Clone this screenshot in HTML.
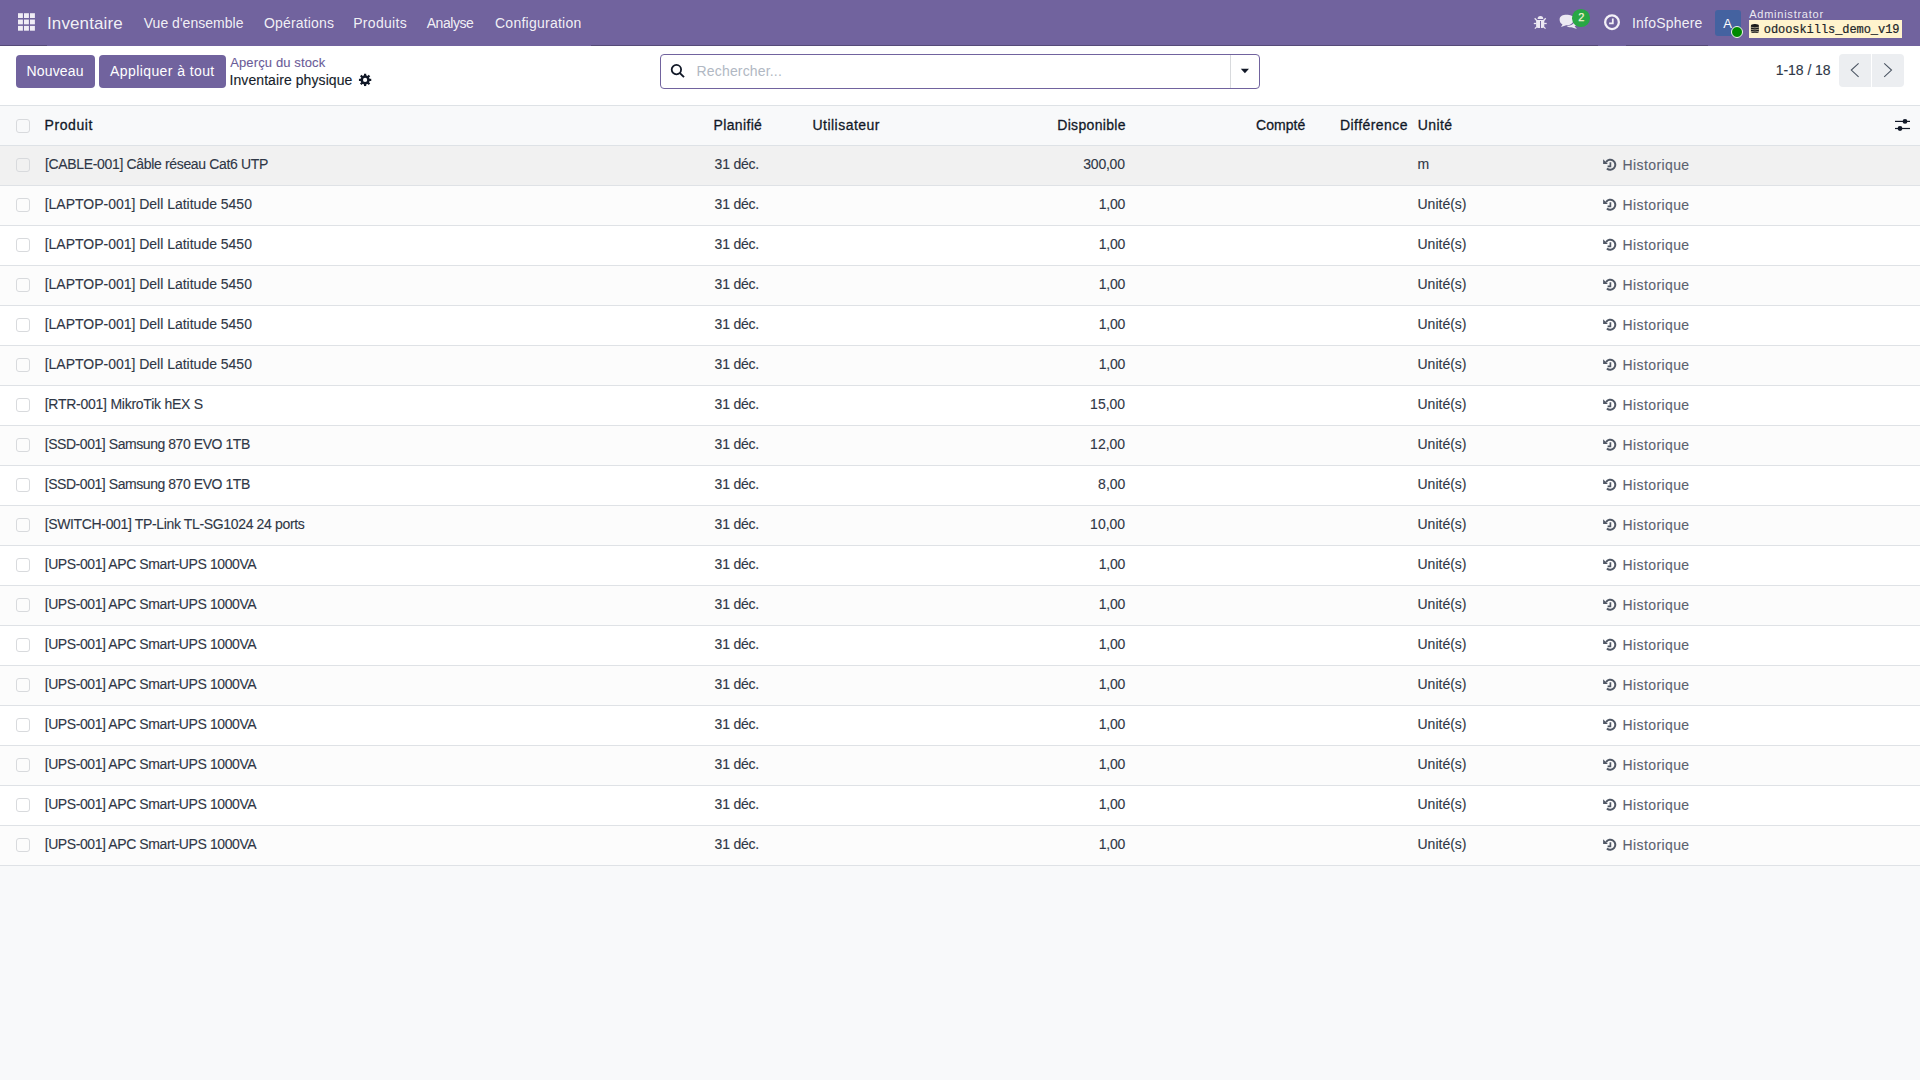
<!DOCTYPE html><html><head><meta charset="utf-8"><style>
html,body{margin:0;padding:0;}
body{width:1920px;height:1080px;overflow:hidden;background:#f8f9fa;position:relative;font-family:'Liberation Sans', sans-serif;}
.t{position:absolute;white-space:nowrap;line-height:20px;}
.abs{position:absolute;}

</style></head><body>
<div class="abs" style="left:0;top:0;width:1920px;height:46px;background:#71639e"></div>
<div class="abs" style="left:0px;top:45px;width:47px;height:1px;background:#554a78"></div>
<div class="abs" style="left:591px;top:45px;width:1007px;height:1px;background:#554a78"></div>
<div class="abs" style="left:1626px;top:45px;width:82px;height:1px;background:#554a78"></div>
<svg class="abs" style="left:0;top:0" width="40" height="40" viewBox="0 0 40 40"><rect x="18.00" y="13.20" width="4.9" height="4.8" fill="#f0edf5"/><rect x="24.00" y="13.20" width="4.9" height="4.8" fill="#f0edf5"/><rect x="30.00" y="13.20" width="4.9" height="4.8" fill="#f0edf5"/><rect x="18.00" y="19.55" width="4.9" height="4.8" fill="#f0edf5"/><rect x="24.00" y="19.55" width="4.9" height="4.8" fill="#f0edf5"/><rect x="30.00" y="19.55" width="4.9" height="4.8" fill="#f0edf5"/><rect x="18.00" y="25.90" width="4.9" height="4.8" fill="#f0edf5"/><rect x="24.00" y="25.90" width="4.9" height="4.8" fill="#f0edf5"/><rect x="30.00" y="25.90" width="4.9" height="4.8" fill="#f0edf5"/></svg>
<div class="t" style="left:47.00px;top:14px;font-size:17px;font-weight:400;color:rgba(255,255,255,0.92);letter-spacing:0.11px;">Inventaire</div>
<div class="t" style="left:143.75px;top:13px;font-size:14px;font-weight:400;color:rgba(255,255,255,0.92);letter-spacing:0.02px;">Vue d'ensemble</div>
<div class="t" style="left:264.00px;top:13px;font-size:14px;font-weight:400;color:rgba(255,255,255,0.92);letter-spacing:0.17px;">Opérations</div>
<div class="t" style="left:353.20px;top:13px;font-size:14px;font-weight:400;color:rgba(255,255,255,0.92);letter-spacing:0.31px;">Produits</div>
<div class="t" style="left:426.70px;top:13px;font-size:14px;font-weight:400;color:rgba(255,255,255,0.92);letter-spacing:-0.45px;">Analyse</div>
<div class="t" style="left:495.00px;top:13px;font-size:14px;font-weight:400;color:rgba(255,255,255,0.92);letter-spacing:0.25px;">Configuration</div>
<svg class="abs" style="left:1530px;top:10px" width="22" height="22" viewBox="0 0 22 22"><g fill="#ece9f3"><path d="M7.6 9 A2.85 3.1 0 0 1 13.3 9 Z"/><path d="M6.1 10 H14.3 V16 Q14.3 18 12.3 18 H8.1 Q6.1 18 6.1 16Z"/></g><rect x="10.05" y="11" width="0.95" height="7.2" fill="#71639e"/><g stroke="#ece9f3" stroke-width="1.3"><line x1="4.7" y1="8.3" x2="6.8" y2="10.5"/><line x1="15.7" y1="8.3" x2="13.6" y2="10.5"/><line x1="3.8" y1="13.5" x2="6.3" y2="13.5"/><line x1="14.1" y1="13.5" x2="16.7" y2="13.5"/><line x1="4.9" y1="18.6" x2="7" y2="16.6"/><line x1="15.5" y1="18.6" x2="13.4" y2="16.6"/></g></svg>
<svg class="abs" style="left:1555px;top:6px" width="40" height="28" viewBox="0 0 40 28"><g fill="#ece9f3"><path d="M19 12.5 C19 18 14 19.5 11.2 19.2 L6 21 L7.5 18.5 C5.5 17.5 4.6 15.5 4.6 13.5 C4.6 10 8 8.7 11.5 8.7 C15 8.7 19 9.8 19 12.5Z"/><path d="M19.8 14 C21.5 15 22 16.5 21.6 18 C21.2 19.3 20.2 20 19.6 20.3 L21.9 23 L16.5 21.3 C14.3 21.4 12.4 20.8 11.6 19.9 C16.5 19.6 19.8 17.8 19.8 14Z"/></g></svg>
<div class="abs" style="left:1572px;top:9px;width:18px;height:17.5px;border-radius:50%;background:#28a745"></div>
<div class="t" style="left:1578.20px;top:7px;font-size:11px;font-weight:400;color:#f6f3d0;-webkit-text-stroke:0.25px #f6f3d0;">2</div>
<svg class="abs" style="left:1603px;top:14px" width="18" height="18" viewBox="0 0 18 18"><circle cx="9" cy="8.2" r="6.85" fill="none" stroke="#f3f0f7" stroke-width="2.3"/><path d="M9.8 4.4 V9.3 H6.1" fill="none" stroke="#f3f0f7" stroke-width="1.8"/></svg>
<div class="t" style="left:1632.00px;top:13px;font-size:14px;font-weight:400;color:rgba(255,255,255,0.92);letter-spacing:0.2px;">InfoSphere</div>
<div class="abs" style="left:1715px;top:10px;width:26px;height:26px;border-radius:3px;background:#4462a0"></div>
<div class="t" style="left:1723.20px;top:14px;font-size:13px;font-weight:400;color:#ffffff;">A</div>
<div class="abs" style="left:1730.5px;top:25.5px;width:10px;height:10px;border-radius:50%;background:#008a00;border:1.3px solid #f3f3f3"></div>
<div class="t" style="left:1749.20px;top:4px;font-size:11px;font-weight:400;color:rgba(255,255,255,0.88);letter-spacing:0.76px;">Administrator</div>
<div class="abs" style="left:1749px;top:20px;width:153px;height:18px;background:#fff3cd"></div>
<svg class="abs" style="left:1750px;top:23px" width="10" height="12" viewBox="0 0 10 12"><rect x="0.9" y="1.1" width="8" height="9" rx="3.6" ry="1.6" fill="#1b1b1b"/><path d="M0.9 4.2 Q4.9 5.4 8.9 4.2 M0.9 6.3 Q4.9 7.5 8.9 6.3 M0.9 8.4 Q4.9 9.6 8.9 8.4" fill="none" stroke="#e9dfc0" stroke-width="0.6"/></svg>
<div class="t" style="left:1763.75px;top:20px;font-size:12px;font-weight:400;color:#212529;font-family:'Liberation Mono',monospace;letter-spacing:-0.06px;-webkit-text-stroke:0.2px #212529;">odooskills_demo_v19</div>
<div class="abs" style="left:0;top:46px;width:1920px;height:59px;background:#ffffff;border-bottom:1px solid #dee2e6"></div>
<div class="abs" style="left:16px;top:55px;width:79px;height:33px;border-radius:4px;background:#71639e"></div>
<div class="t" style="left:26.40px;top:61px;font-size:14px;font-weight:400;color:#ffffff;letter-spacing:0.2px;">Nouveau</div>
<div class="abs" style="left:99px;top:55px;width:127px;height:33px;border-radius:4px;background:#71639e"></div>
<div class="t" style="left:110.00px;top:61px;font-size:14px;font-weight:400;color:#ffffff;letter-spacing:0.41px;">Appliquer à tout</div>
<div class="t" style="left:230.20px;top:53px;font-size:13px;font-weight:400;color:#6a5b98;letter-spacing:0.13px;-webkit-text-stroke:0.1px #6a5b98;">Aperçu du stock</div>
<div class="t" style="left:229.50px;top:70px;font-size:14px;font-weight:400;color:#161c2a;letter-spacing:0.08px;-webkit-text-stroke:0.12px #161c2a;">Inventaire physique</div>
<svg class="abs" style="left:358px;top:73px" width="14" height="14" viewBox="0 0 14 14"><g fill="#111827"><circle cx="7.1" cy="6.9" r="4.6"/><rect x="6" y="0.75" width="2.2" height="3.5" transform="rotate(0 7.1 6.9)"/><rect x="6" y="0.75" width="2.2" height="3.5" transform="rotate(45 7.1 6.9)"/><rect x="6" y="0.75" width="2.2" height="3.5" transform="rotate(90 7.1 6.9)"/><rect x="6" y="0.75" width="2.2" height="3.5" transform="rotate(135 7.1 6.9)"/><rect x="6" y="0.75" width="2.2" height="3.5" transform="rotate(180 7.1 6.9)"/><rect x="6" y="0.75" width="2.2" height="3.5" transform="rotate(225 7.1 6.9)"/><rect x="6" y="0.75" width="2.2" height="3.5" transform="rotate(270 7.1 6.9)"/><rect x="6" y="0.75" width="2.2" height="3.5" transform="rotate(315 7.1 6.9)"/></g><circle cx="7.1" cy="6.9" r="2.1" fill="#fff"/></svg>
<div class="abs" style="left:660px;top:54px;width:598px;height:33px;border:1px solid #71639e;border-radius:4px;background:#fff"></div>
<div class="abs" style="left:1230px;top:55px;width:1px;height:33px;background:#d8dadd"></div>
<svg class="abs" style="left:670px;top:63px" width="16" height="16" viewBox="0 0 16 16"><circle cx="6.4" cy="6.6" r="4.7" fill="none" stroke="#111827" stroke-width="1.8"/><line x1="9.9" y1="10.1" x2="14" y2="14.2" stroke="#111827" stroke-width="1.9"/></svg>
<div class="t" style="left:696.60px;top:61px;font-size:14px;font-weight:400;color:#b1b8c3;letter-spacing:0.16px;">Rechercher...</div>
<svg class="abs" style="left:1240px;top:68px" width="10" height="6" viewBox="0 0 10 6"><path d="M0.8 0.8 H9 L4.9 5.2Z" fill="#111827"/></svg>
<div class="t" style="left:1775.70px;top:60px;font-size:14px;font-weight:400;color:#2f3746;letter-spacing:-0.04px;-webkit-text-stroke:0.12px #2f3746;">1-18 / 18</div>
<div class="abs" style="left:1839px;top:54px;width:32px;height:33px;border-radius:4px 0 0 4px;background:#eceef1"></div>
<div class="abs" style="left:1872px;top:54px;width:32px;height:33px;border-radius:0 4px 4px 0;background:#eceef1"></div>
<svg class="abs" style="left:1849px;top:62px" width="12" height="17" viewBox="0 0 12 17"><path d="M9.6 1.3 L2.3 8.1 L9.6 14.9" fill="none" stroke="#4b5563" stroke-width="1.1"/></svg>
<svg class="abs" style="left:1882px;top:62px" width="12" height="17" viewBox="0 0 12 17"><path d="M2.2 1.3 L9.5 8.1 L2.2 14.9" fill="none" stroke="#4b5563" stroke-width="1.1"/></svg>
<div class="abs" style="left:0;top:106px;width:1920px;height:39px;background:#f8f9fa;border-bottom:1px solid #dee2e6"></div>
<div class="abs" style="left:16px;top:119px;width:12px;height:12px;border:1px solid #d8dadd;border-radius:3px"></div>
<div class="t" style="left:44.60px;top:115px;font-size:14px;font-weight:400;color:#111827;letter-spacing:0.57px;-webkit-text-stroke:0.28px #111827;">Produit</div>
<div class="t" style="left:713.60px;top:115px;font-size:14px;font-weight:400;color:#111827;letter-spacing:0.34px;-webkit-text-stroke:0.28px #111827;">Planifié</div>
<div class="t" style="left:812.50px;top:115px;font-size:14px;font-weight:400;color:#111827;letter-spacing:0.47px;-webkit-text-stroke:0.28px #111827;">Utilisateur</div>
<div class="t" style="left:1057.20px;top:115px;font-size:14px;font-weight:400;color:#111827;letter-spacing:0.33px;-webkit-text-stroke:0.28px #111827;">Disponible</div>
<div class="t" style="left:1256.00px;top:115px;font-size:14px;font-weight:400;color:#111827;letter-spacing:0.05px;-webkit-text-stroke:0.28px #111827;">Compté</div>
<div class="t" style="left:1340.00px;top:115px;font-size:14px;font-weight:400;color:#111827;letter-spacing:0.44px;-webkit-text-stroke:0.28px #111827;">Différence</div>
<div class="t" style="left:1417.75px;top:115px;font-size:14px;font-weight:400;color:#111827;letter-spacing:0.38px;-webkit-text-stroke:0.28px #111827;">Unité</div>
<svg class="abs" style="left:1894px;top:117px" width="17" height="16" viewBox="0 0 17 16"><line x1="1" y1="4.4" x2="16" y2="4.4" stroke="#111827" stroke-width="1.2"/><circle cx="11" cy="4.4" r="2.4" fill="#111827"/><line x1="1" y1="11.5" x2="16" y2="11.5" stroke="#111827" stroke-width="1.2"/><circle cx="6" cy="11.5" r="2.4" fill="#111827"/></svg>
<div class="abs" style="left:0;top:146px;width:1920px;height:39px;background:#f1f1f1;border-bottom:1px solid #dfe2e6"></div>
<div class="abs" style="left:16px;top:158px;width:12px;height:12px;border:1px solid #d8dadd;border-radius:3px"></div>
<div class="t" style="left:45.00px;top:154px;font-size:14px;font-weight:400;color:#2f3746;letter-spacing:-0.34px;-webkit-text-stroke:0.12px #2f3746;">[CABLE-001] Câble réseau Cat6 UTP</div>
<div class="t" style="left:714.60px;top:154px;font-size:14px;font-weight:400;color:#2f3746;letter-spacing:-0.22px;-webkit-text-stroke:0.12px #2f3746;">31 déc.</div>
<div class="t" style="left:1083.30px;top:154px;font-size:14px;font-weight:400;color:#2f3746;letter-spacing:-0.24px;-webkit-text-stroke:0.12px #2f3746;">300,00</div>
<div class="t" style="left:1417.50px;top:154px;font-size:14px;font-weight:400;color:#2f3746;-webkit-text-stroke:0.12px #2f3746;">m</div>
<svg class="abs" style="left:1598px;top:154px" width="24" height="22" viewBox="0 0 24 22"><path d="M5.1 5.3 V10 H9.9Z" fill="#505866"/><path d="M8.1 8.1 A5 5 0 1 1 8.9 14.4" fill="none" stroke="#505866" stroke-width="2"/><path d="M12.4 8.2 V12.3 H9.6" fill="none" stroke="#505866" stroke-width="1.7"/></svg>
<div class="t" style="left:1622.50px;top:155px;font-size:14px;font-weight:400;color:#5b6270;letter-spacing:0.4px;-webkit-text-stroke:0.12px #5b6270;">Historique</div>
<div class="abs" style="left:0;top:186px;width:1920px;height:39px;background:#fcfcfc;border-bottom:1px solid #dfe2e6"></div>
<div class="abs" style="left:16px;top:198px;width:12px;height:12px;border:1px solid #d8dadd;border-radius:3px"></div>
<div class="t" style="left:44.70px;top:194px;font-size:14px;font-weight:400;color:#2f3746;letter-spacing:-0.01px;-webkit-text-stroke:0.12px #2f3746;">[LAPTOP-001] Dell Latitude 5450</div>
<div class="t" style="left:714.60px;top:194px;font-size:14px;font-weight:400;color:#2f3746;letter-spacing:-0.22px;-webkit-text-stroke:0.12px #2f3746;">31 déc.</div>
<div class="t" style="left:1098.80px;top:194px;font-size:14px;font-weight:400;color:#2f3746;letter-spacing:-0.23px;-webkit-text-stroke:0.12px #2f3746;">1,00</div>
<div class="t" style="left:1417.50px;top:194px;font-size:14px;font-weight:400;color:#2f3746;-webkit-text-stroke:0.12px #2f3746;">Unité(s)</div>
<svg class="abs" style="left:1598px;top:194px" width="24" height="22" viewBox="0 0 24 22"><path d="M5.1 5.3 V10 H9.9Z" fill="#505866"/><path d="M8.1 8.1 A5 5 0 1 1 8.9 14.4" fill="none" stroke="#505866" stroke-width="2"/><path d="M12.4 8.2 V12.3 H9.6" fill="none" stroke="#505866" stroke-width="1.7"/></svg>
<div class="t" style="left:1622.50px;top:195px;font-size:14px;font-weight:400;color:#5b6270;letter-spacing:0.4px;-webkit-text-stroke:0.12px #5b6270;">Historique</div>
<div class="abs" style="left:0;top:226px;width:1920px;height:39px;background:#ffffff;border-bottom:1px solid #dfe2e6"></div>
<div class="abs" style="left:16px;top:238px;width:12px;height:12px;border:1px solid #d8dadd;border-radius:3px"></div>
<div class="t" style="left:44.70px;top:234px;font-size:14px;font-weight:400;color:#2f3746;letter-spacing:-0.01px;-webkit-text-stroke:0.12px #2f3746;">[LAPTOP-001] Dell Latitude 5450</div>
<div class="t" style="left:714.60px;top:234px;font-size:14px;font-weight:400;color:#2f3746;letter-spacing:-0.22px;-webkit-text-stroke:0.12px #2f3746;">31 déc.</div>
<div class="t" style="left:1098.80px;top:234px;font-size:14px;font-weight:400;color:#2f3746;letter-spacing:-0.23px;-webkit-text-stroke:0.12px #2f3746;">1,00</div>
<div class="t" style="left:1417.50px;top:234px;font-size:14px;font-weight:400;color:#2f3746;-webkit-text-stroke:0.12px #2f3746;">Unité(s)</div>
<svg class="abs" style="left:1598px;top:234px" width="24" height="22" viewBox="0 0 24 22"><path d="M5.1 5.3 V10 H9.9Z" fill="#505866"/><path d="M8.1 8.1 A5 5 0 1 1 8.9 14.4" fill="none" stroke="#505866" stroke-width="2"/><path d="M12.4 8.2 V12.3 H9.6" fill="none" stroke="#505866" stroke-width="1.7"/></svg>
<div class="t" style="left:1622.50px;top:235px;font-size:14px;font-weight:400;color:#5b6270;letter-spacing:0.4px;-webkit-text-stroke:0.12px #5b6270;">Historique</div>
<div class="abs" style="left:0;top:266px;width:1920px;height:39px;background:#fcfcfc;border-bottom:1px solid #dfe2e6"></div>
<div class="abs" style="left:16px;top:278px;width:12px;height:12px;border:1px solid #d8dadd;border-radius:3px"></div>
<div class="t" style="left:44.70px;top:274px;font-size:14px;font-weight:400;color:#2f3746;letter-spacing:-0.01px;-webkit-text-stroke:0.12px #2f3746;">[LAPTOP-001] Dell Latitude 5450</div>
<div class="t" style="left:714.60px;top:274px;font-size:14px;font-weight:400;color:#2f3746;letter-spacing:-0.22px;-webkit-text-stroke:0.12px #2f3746;">31 déc.</div>
<div class="t" style="left:1098.80px;top:274px;font-size:14px;font-weight:400;color:#2f3746;letter-spacing:-0.23px;-webkit-text-stroke:0.12px #2f3746;">1,00</div>
<div class="t" style="left:1417.50px;top:274px;font-size:14px;font-weight:400;color:#2f3746;-webkit-text-stroke:0.12px #2f3746;">Unité(s)</div>
<svg class="abs" style="left:1598px;top:274px" width="24" height="22" viewBox="0 0 24 22"><path d="M5.1 5.3 V10 H9.9Z" fill="#505866"/><path d="M8.1 8.1 A5 5 0 1 1 8.9 14.4" fill="none" stroke="#505866" stroke-width="2"/><path d="M12.4 8.2 V12.3 H9.6" fill="none" stroke="#505866" stroke-width="1.7"/></svg>
<div class="t" style="left:1622.50px;top:275px;font-size:14px;font-weight:400;color:#5b6270;letter-spacing:0.4px;-webkit-text-stroke:0.12px #5b6270;">Historique</div>
<div class="abs" style="left:0;top:306px;width:1920px;height:39px;background:#ffffff;border-bottom:1px solid #dfe2e6"></div>
<div class="abs" style="left:16px;top:318px;width:12px;height:12px;border:1px solid #d8dadd;border-radius:3px"></div>
<div class="t" style="left:44.70px;top:314px;font-size:14px;font-weight:400;color:#2f3746;letter-spacing:-0.01px;-webkit-text-stroke:0.12px #2f3746;">[LAPTOP-001] Dell Latitude 5450</div>
<div class="t" style="left:714.60px;top:314px;font-size:14px;font-weight:400;color:#2f3746;letter-spacing:-0.22px;-webkit-text-stroke:0.12px #2f3746;">31 déc.</div>
<div class="t" style="left:1098.80px;top:314px;font-size:14px;font-weight:400;color:#2f3746;letter-spacing:-0.23px;-webkit-text-stroke:0.12px #2f3746;">1,00</div>
<div class="t" style="left:1417.50px;top:314px;font-size:14px;font-weight:400;color:#2f3746;-webkit-text-stroke:0.12px #2f3746;">Unité(s)</div>
<svg class="abs" style="left:1598px;top:314px" width="24" height="22" viewBox="0 0 24 22"><path d="M5.1 5.3 V10 H9.9Z" fill="#505866"/><path d="M8.1 8.1 A5 5 0 1 1 8.9 14.4" fill="none" stroke="#505866" stroke-width="2"/><path d="M12.4 8.2 V12.3 H9.6" fill="none" stroke="#505866" stroke-width="1.7"/></svg>
<div class="t" style="left:1622.50px;top:315px;font-size:14px;font-weight:400;color:#5b6270;letter-spacing:0.4px;-webkit-text-stroke:0.12px #5b6270;">Historique</div>
<div class="abs" style="left:0;top:346px;width:1920px;height:39px;background:#fcfcfc;border-bottom:1px solid #dfe2e6"></div>
<div class="abs" style="left:16px;top:358px;width:12px;height:12px;border:1px solid #d8dadd;border-radius:3px"></div>
<div class="t" style="left:44.70px;top:354px;font-size:14px;font-weight:400;color:#2f3746;letter-spacing:-0.01px;-webkit-text-stroke:0.12px #2f3746;">[LAPTOP-001] Dell Latitude 5450</div>
<div class="t" style="left:714.60px;top:354px;font-size:14px;font-weight:400;color:#2f3746;letter-spacing:-0.22px;-webkit-text-stroke:0.12px #2f3746;">31 déc.</div>
<div class="t" style="left:1098.80px;top:354px;font-size:14px;font-weight:400;color:#2f3746;letter-spacing:-0.23px;-webkit-text-stroke:0.12px #2f3746;">1,00</div>
<div class="t" style="left:1417.50px;top:354px;font-size:14px;font-weight:400;color:#2f3746;-webkit-text-stroke:0.12px #2f3746;">Unité(s)</div>
<svg class="abs" style="left:1598px;top:354px" width="24" height="22" viewBox="0 0 24 22"><path d="M5.1 5.3 V10 H9.9Z" fill="#505866"/><path d="M8.1 8.1 A5 5 0 1 1 8.9 14.4" fill="none" stroke="#505866" stroke-width="2"/><path d="M12.4 8.2 V12.3 H9.6" fill="none" stroke="#505866" stroke-width="1.7"/></svg>
<div class="t" style="left:1622.50px;top:355px;font-size:14px;font-weight:400;color:#5b6270;letter-spacing:0.4px;-webkit-text-stroke:0.12px #5b6270;">Historique</div>
<div class="abs" style="left:0;top:386px;width:1920px;height:39px;background:#ffffff;border-bottom:1px solid #dfe2e6"></div>
<div class="abs" style="left:16px;top:398px;width:12px;height:12px;border:1px solid #d8dadd;border-radius:3px"></div>
<div class="t" style="left:44.70px;top:394px;font-size:14px;font-weight:400;color:#2f3746;letter-spacing:-0.25px;-webkit-text-stroke:0.12px #2f3746;">[RTR-001] MikroTik hEX S</div>
<div class="t" style="left:714.60px;top:394px;font-size:14px;font-weight:400;color:#2f3746;letter-spacing:-0.22px;-webkit-text-stroke:0.12px #2f3746;">31 déc.</div>
<div class="t" style="left:1090.10px;top:394px;font-size:14px;font-weight:400;color:#2f3746;-webkit-text-stroke:0.12px #2f3746;">15,00</div>
<div class="t" style="left:1417.50px;top:394px;font-size:14px;font-weight:400;color:#2f3746;-webkit-text-stroke:0.12px #2f3746;">Unité(s)</div>
<svg class="abs" style="left:1598px;top:394px" width="24" height="22" viewBox="0 0 24 22"><path d="M5.1 5.3 V10 H9.9Z" fill="#505866"/><path d="M8.1 8.1 A5 5 0 1 1 8.9 14.4" fill="none" stroke="#505866" stroke-width="2"/><path d="M12.4 8.2 V12.3 H9.6" fill="none" stroke="#505866" stroke-width="1.7"/></svg>
<div class="t" style="left:1622.50px;top:395px;font-size:14px;font-weight:400;color:#5b6270;letter-spacing:0.4px;-webkit-text-stroke:0.12px #5b6270;">Historique</div>
<div class="abs" style="left:0;top:426px;width:1920px;height:39px;background:#fcfcfc;border-bottom:1px solid #dfe2e6"></div>
<div class="abs" style="left:16px;top:438px;width:12px;height:12px;border:1px solid #d8dadd;border-radius:3px"></div>
<div class="t" style="left:44.70px;top:434px;font-size:14px;font-weight:400;color:#2f3746;letter-spacing:-0.44px;-webkit-text-stroke:0.12px #2f3746;">[SSD-001] Samsung 870 EVO 1TB</div>
<div class="t" style="left:714.60px;top:434px;font-size:14px;font-weight:400;color:#2f3746;letter-spacing:-0.22px;-webkit-text-stroke:0.12px #2f3746;">31 déc.</div>
<div class="t" style="left:1090.10px;top:434px;font-size:14px;font-weight:400;color:#2f3746;-webkit-text-stroke:0.12px #2f3746;">12,00</div>
<div class="t" style="left:1417.50px;top:434px;font-size:14px;font-weight:400;color:#2f3746;-webkit-text-stroke:0.12px #2f3746;">Unité(s)</div>
<svg class="abs" style="left:1598px;top:434px" width="24" height="22" viewBox="0 0 24 22"><path d="M5.1 5.3 V10 H9.9Z" fill="#505866"/><path d="M8.1 8.1 A5 5 0 1 1 8.9 14.4" fill="none" stroke="#505866" stroke-width="2"/><path d="M12.4 8.2 V12.3 H9.6" fill="none" stroke="#505866" stroke-width="1.7"/></svg>
<div class="t" style="left:1622.50px;top:435px;font-size:14px;font-weight:400;color:#5b6270;letter-spacing:0.4px;-webkit-text-stroke:0.12px #5b6270;">Historique</div>
<div class="abs" style="left:0;top:466px;width:1920px;height:39px;background:#ffffff;border-bottom:1px solid #dfe2e6"></div>
<div class="abs" style="left:16px;top:478px;width:12px;height:12px;border:1px solid #d8dadd;border-radius:3px"></div>
<div class="t" style="left:44.70px;top:474px;font-size:14px;font-weight:400;color:#2f3746;letter-spacing:-0.44px;-webkit-text-stroke:0.12px #2f3746;">[SSD-001] Samsung 870 EVO 1TB</div>
<div class="t" style="left:714.60px;top:474px;font-size:14px;font-weight:400;color:#2f3746;letter-spacing:-0.22px;-webkit-text-stroke:0.12px #2f3746;">31 déc.</div>
<div class="t" style="left:1098.10px;top:474px;font-size:14px;font-weight:400;color:#2f3746;-webkit-text-stroke:0.12px #2f3746;">8,00</div>
<div class="t" style="left:1417.50px;top:474px;font-size:14px;font-weight:400;color:#2f3746;-webkit-text-stroke:0.12px #2f3746;">Unité(s)</div>
<svg class="abs" style="left:1598px;top:474px" width="24" height="22" viewBox="0 0 24 22"><path d="M5.1 5.3 V10 H9.9Z" fill="#505866"/><path d="M8.1 8.1 A5 5 0 1 1 8.9 14.4" fill="none" stroke="#505866" stroke-width="2"/><path d="M12.4 8.2 V12.3 H9.6" fill="none" stroke="#505866" stroke-width="1.7"/></svg>
<div class="t" style="left:1622.50px;top:475px;font-size:14px;font-weight:400;color:#5b6270;letter-spacing:0.4px;-webkit-text-stroke:0.12px #5b6270;">Historique</div>
<div class="abs" style="left:0;top:506px;width:1920px;height:39px;background:#fcfcfc;border-bottom:1px solid #dfe2e6"></div>
<div class="abs" style="left:16px;top:518px;width:12px;height:12px;border:1px solid #d8dadd;border-radius:3px"></div>
<div class="t" style="left:44.70px;top:514px;font-size:14px;font-weight:400;color:#2f3746;letter-spacing:-0.35px;-webkit-text-stroke:0.12px #2f3746;">[SWITCH-001] TP-Link TL-SG1024 24 ports</div>
<div class="t" style="left:714.60px;top:514px;font-size:14px;font-weight:400;color:#2f3746;letter-spacing:-0.22px;-webkit-text-stroke:0.12px #2f3746;">31 déc.</div>
<div class="t" style="left:1090.10px;top:514px;font-size:14px;font-weight:400;color:#2f3746;-webkit-text-stroke:0.12px #2f3746;">10,00</div>
<div class="t" style="left:1417.50px;top:514px;font-size:14px;font-weight:400;color:#2f3746;-webkit-text-stroke:0.12px #2f3746;">Unité(s)</div>
<svg class="abs" style="left:1598px;top:514px" width="24" height="22" viewBox="0 0 24 22"><path d="M5.1 5.3 V10 H9.9Z" fill="#505866"/><path d="M8.1 8.1 A5 5 0 1 1 8.9 14.4" fill="none" stroke="#505866" stroke-width="2"/><path d="M12.4 8.2 V12.3 H9.6" fill="none" stroke="#505866" stroke-width="1.7"/></svg>
<div class="t" style="left:1622.50px;top:515px;font-size:14px;font-weight:400;color:#5b6270;letter-spacing:0.4px;-webkit-text-stroke:0.12px #5b6270;">Historique</div>
<div class="abs" style="left:0;top:546px;width:1920px;height:39px;background:#ffffff;border-bottom:1px solid #dfe2e6"></div>
<div class="abs" style="left:16px;top:558px;width:12px;height:12px;border:1px solid #d8dadd;border-radius:3px"></div>
<div class="t" style="left:44.70px;top:554px;font-size:14px;font-weight:400;color:#2f3746;letter-spacing:-0.41px;-webkit-text-stroke:0.12px #2f3746;">[UPS-001] APC Smart-UPS 1000VA</div>
<div class="t" style="left:714.60px;top:554px;font-size:14px;font-weight:400;color:#2f3746;letter-spacing:-0.22px;-webkit-text-stroke:0.12px #2f3746;">31 déc.</div>
<div class="t" style="left:1098.80px;top:554px;font-size:14px;font-weight:400;color:#2f3746;letter-spacing:-0.23px;-webkit-text-stroke:0.12px #2f3746;">1,00</div>
<div class="t" style="left:1417.50px;top:554px;font-size:14px;font-weight:400;color:#2f3746;-webkit-text-stroke:0.12px #2f3746;">Unité(s)</div>
<svg class="abs" style="left:1598px;top:554px" width="24" height="22" viewBox="0 0 24 22"><path d="M5.1 5.3 V10 H9.9Z" fill="#505866"/><path d="M8.1 8.1 A5 5 0 1 1 8.9 14.4" fill="none" stroke="#505866" stroke-width="2"/><path d="M12.4 8.2 V12.3 H9.6" fill="none" stroke="#505866" stroke-width="1.7"/></svg>
<div class="t" style="left:1622.50px;top:555px;font-size:14px;font-weight:400;color:#5b6270;letter-spacing:0.4px;-webkit-text-stroke:0.12px #5b6270;">Historique</div>
<div class="abs" style="left:0;top:586px;width:1920px;height:39px;background:#fcfcfc;border-bottom:1px solid #dfe2e6"></div>
<div class="abs" style="left:16px;top:598px;width:12px;height:12px;border:1px solid #d8dadd;border-radius:3px"></div>
<div class="t" style="left:44.70px;top:594px;font-size:14px;font-weight:400;color:#2f3746;letter-spacing:-0.41px;-webkit-text-stroke:0.12px #2f3746;">[UPS-001] APC Smart-UPS 1000VA</div>
<div class="t" style="left:714.60px;top:594px;font-size:14px;font-weight:400;color:#2f3746;letter-spacing:-0.22px;-webkit-text-stroke:0.12px #2f3746;">31 déc.</div>
<div class="t" style="left:1098.80px;top:594px;font-size:14px;font-weight:400;color:#2f3746;letter-spacing:-0.23px;-webkit-text-stroke:0.12px #2f3746;">1,00</div>
<div class="t" style="left:1417.50px;top:594px;font-size:14px;font-weight:400;color:#2f3746;-webkit-text-stroke:0.12px #2f3746;">Unité(s)</div>
<svg class="abs" style="left:1598px;top:594px" width="24" height="22" viewBox="0 0 24 22"><path d="M5.1 5.3 V10 H9.9Z" fill="#505866"/><path d="M8.1 8.1 A5 5 0 1 1 8.9 14.4" fill="none" stroke="#505866" stroke-width="2"/><path d="M12.4 8.2 V12.3 H9.6" fill="none" stroke="#505866" stroke-width="1.7"/></svg>
<div class="t" style="left:1622.50px;top:595px;font-size:14px;font-weight:400;color:#5b6270;letter-spacing:0.4px;-webkit-text-stroke:0.12px #5b6270;">Historique</div>
<div class="abs" style="left:0;top:626px;width:1920px;height:39px;background:#ffffff;border-bottom:1px solid #dfe2e6"></div>
<div class="abs" style="left:16px;top:638px;width:12px;height:12px;border:1px solid #d8dadd;border-radius:3px"></div>
<div class="t" style="left:44.70px;top:634px;font-size:14px;font-weight:400;color:#2f3746;letter-spacing:-0.41px;-webkit-text-stroke:0.12px #2f3746;">[UPS-001] APC Smart-UPS 1000VA</div>
<div class="t" style="left:714.60px;top:634px;font-size:14px;font-weight:400;color:#2f3746;letter-spacing:-0.22px;-webkit-text-stroke:0.12px #2f3746;">31 déc.</div>
<div class="t" style="left:1098.80px;top:634px;font-size:14px;font-weight:400;color:#2f3746;letter-spacing:-0.23px;-webkit-text-stroke:0.12px #2f3746;">1,00</div>
<div class="t" style="left:1417.50px;top:634px;font-size:14px;font-weight:400;color:#2f3746;-webkit-text-stroke:0.12px #2f3746;">Unité(s)</div>
<svg class="abs" style="left:1598px;top:634px" width="24" height="22" viewBox="0 0 24 22"><path d="M5.1 5.3 V10 H9.9Z" fill="#505866"/><path d="M8.1 8.1 A5 5 0 1 1 8.9 14.4" fill="none" stroke="#505866" stroke-width="2"/><path d="M12.4 8.2 V12.3 H9.6" fill="none" stroke="#505866" stroke-width="1.7"/></svg>
<div class="t" style="left:1622.50px;top:635px;font-size:14px;font-weight:400;color:#5b6270;letter-spacing:0.4px;-webkit-text-stroke:0.12px #5b6270;">Historique</div>
<div class="abs" style="left:0;top:666px;width:1920px;height:39px;background:#fcfcfc;border-bottom:1px solid #dfe2e6"></div>
<div class="abs" style="left:16px;top:678px;width:12px;height:12px;border:1px solid #d8dadd;border-radius:3px"></div>
<div class="t" style="left:44.70px;top:674px;font-size:14px;font-weight:400;color:#2f3746;letter-spacing:-0.41px;-webkit-text-stroke:0.12px #2f3746;">[UPS-001] APC Smart-UPS 1000VA</div>
<div class="t" style="left:714.60px;top:674px;font-size:14px;font-weight:400;color:#2f3746;letter-spacing:-0.22px;-webkit-text-stroke:0.12px #2f3746;">31 déc.</div>
<div class="t" style="left:1098.80px;top:674px;font-size:14px;font-weight:400;color:#2f3746;letter-spacing:-0.23px;-webkit-text-stroke:0.12px #2f3746;">1,00</div>
<div class="t" style="left:1417.50px;top:674px;font-size:14px;font-weight:400;color:#2f3746;-webkit-text-stroke:0.12px #2f3746;">Unité(s)</div>
<svg class="abs" style="left:1598px;top:674px" width="24" height="22" viewBox="0 0 24 22"><path d="M5.1 5.3 V10 H9.9Z" fill="#505866"/><path d="M8.1 8.1 A5 5 0 1 1 8.9 14.4" fill="none" stroke="#505866" stroke-width="2"/><path d="M12.4 8.2 V12.3 H9.6" fill="none" stroke="#505866" stroke-width="1.7"/></svg>
<div class="t" style="left:1622.50px;top:675px;font-size:14px;font-weight:400;color:#5b6270;letter-spacing:0.4px;-webkit-text-stroke:0.12px #5b6270;">Historique</div>
<div class="abs" style="left:0;top:706px;width:1920px;height:39px;background:#ffffff;border-bottom:1px solid #dfe2e6"></div>
<div class="abs" style="left:16px;top:718px;width:12px;height:12px;border:1px solid #d8dadd;border-radius:3px"></div>
<div class="t" style="left:44.70px;top:714px;font-size:14px;font-weight:400;color:#2f3746;letter-spacing:-0.41px;-webkit-text-stroke:0.12px #2f3746;">[UPS-001] APC Smart-UPS 1000VA</div>
<div class="t" style="left:714.60px;top:714px;font-size:14px;font-weight:400;color:#2f3746;letter-spacing:-0.22px;-webkit-text-stroke:0.12px #2f3746;">31 déc.</div>
<div class="t" style="left:1098.80px;top:714px;font-size:14px;font-weight:400;color:#2f3746;letter-spacing:-0.23px;-webkit-text-stroke:0.12px #2f3746;">1,00</div>
<div class="t" style="left:1417.50px;top:714px;font-size:14px;font-weight:400;color:#2f3746;-webkit-text-stroke:0.12px #2f3746;">Unité(s)</div>
<svg class="abs" style="left:1598px;top:714px" width="24" height="22" viewBox="0 0 24 22"><path d="M5.1 5.3 V10 H9.9Z" fill="#505866"/><path d="M8.1 8.1 A5 5 0 1 1 8.9 14.4" fill="none" stroke="#505866" stroke-width="2"/><path d="M12.4 8.2 V12.3 H9.6" fill="none" stroke="#505866" stroke-width="1.7"/></svg>
<div class="t" style="left:1622.50px;top:715px;font-size:14px;font-weight:400;color:#5b6270;letter-spacing:0.4px;-webkit-text-stroke:0.12px #5b6270;">Historique</div>
<div class="abs" style="left:0;top:746px;width:1920px;height:39px;background:#fcfcfc;border-bottom:1px solid #dfe2e6"></div>
<div class="abs" style="left:16px;top:758px;width:12px;height:12px;border:1px solid #d8dadd;border-radius:3px"></div>
<div class="t" style="left:44.70px;top:754px;font-size:14px;font-weight:400;color:#2f3746;letter-spacing:-0.41px;-webkit-text-stroke:0.12px #2f3746;">[UPS-001] APC Smart-UPS 1000VA</div>
<div class="t" style="left:714.60px;top:754px;font-size:14px;font-weight:400;color:#2f3746;letter-spacing:-0.22px;-webkit-text-stroke:0.12px #2f3746;">31 déc.</div>
<div class="t" style="left:1098.80px;top:754px;font-size:14px;font-weight:400;color:#2f3746;letter-spacing:-0.23px;-webkit-text-stroke:0.12px #2f3746;">1,00</div>
<div class="t" style="left:1417.50px;top:754px;font-size:14px;font-weight:400;color:#2f3746;-webkit-text-stroke:0.12px #2f3746;">Unité(s)</div>
<svg class="abs" style="left:1598px;top:754px" width="24" height="22" viewBox="0 0 24 22"><path d="M5.1 5.3 V10 H9.9Z" fill="#505866"/><path d="M8.1 8.1 A5 5 0 1 1 8.9 14.4" fill="none" stroke="#505866" stroke-width="2"/><path d="M12.4 8.2 V12.3 H9.6" fill="none" stroke="#505866" stroke-width="1.7"/></svg>
<div class="t" style="left:1622.50px;top:755px;font-size:14px;font-weight:400;color:#5b6270;letter-spacing:0.4px;-webkit-text-stroke:0.12px #5b6270;">Historique</div>
<div class="abs" style="left:0;top:786px;width:1920px;height:39px;background:#ffffff;border-bottom:1px solid #dfe2e6"></div>
<div class="abs" style="left:16px;top:798px;width:12px;height:12px;border:1px solid #d8dadd;border-radius:3px"></div>
<div class="t" style="left:44.70px;top:794px;font-size:14px;font-weight:400;color:#2f3746;letter-spacing:-0.41px;-webkit-text-stroke:0.12px #2f3746;">[UPS-001] APC Smart-UPS 1000VA</div>
<div class="t" style="left:714.60px;top:794px;font-size:14px;font-weight:400;color:#2f3746;letter-spacing:-0.22px;-webkit-text-stroke:0.12px #2f3746;">31 déc.</div>
<div class="t" style="left:1098.80px;top:794px;font-size:14px;font-weight:400;color:#2f3746;letter-spacing:-0.23px;-webkit-text-stroke:0.12px #2f3746;">1,00</div>
<div class="t" style="left:1417.50px;top:794px;font-size:14px;font-weight:400;color:#2f3746;-webkit-text-stroke:0.12px #2f3746;">Unité(s)</div>
<svg class="abs" style="left:1598px;top:794px" width="24" height="22" viewBox="0 0 24 22"><path d="M5.1 5.3 V10 H9.9Z" fill="#505866"/><path d="M8.1 8.1 A5 5 0 1 1 8.9 14.4" fill="none" stroke="#505866" stroke-width="2"/><path d="M12.4 8.2 V12.3 H9.6" fill="none" stroke="#505866" stroke-width="1.7"/></svg>
<div class="t" style="left:1622.50px;top:795px;font-size:14px;font-weight:400;color:#5b6270;letter-spacing:0.4px;-webkit-text-stroke:0.12px #5b6270;">Historique</div>
<div class="abs" style="left:0;top:826px;width:1920px;height:39px;background:#fcfcfc;border-bottom:1px solid #dfe2e6"></div>
<div class="abs" style="left:16px;top:838px;width:12px;height:12px;border:1px solid #d8dadd;border-radius:3px"></div>
<div class="t" style="left:44.70px;top:834px;font-size:14px;font-weight:400;color:#2f3746;letter-spacing:-0.41px;-webkit-text-stroke:0.12px #2f3746;">[UPS-001] APC Smart-UPS 1000VA</div>
<div class="t" style="left:714.60px;top:834px;font-size:14px;font-weight:400;color:#2f3746;letter-spacing:-0.22px;-webkit-text-stroke:0.12px #2f3746;">31 déc.</div>
<div class="t" style="left:1098.80px;top:834px;font-size:14px;font-weight:400;color:#2f3746;letter-spacing:-0.23px;-webkit-text-stroke:0.12px #2f3746;">1,00</div>
<div class="t" style="left:1417.50px;top:834px;font-size:14px;font-weight:400;color:#2f3746;-webkit-text-stroke:0.12px #2f3746;">Unité(s)</div>
<svg class="abs" style="left:1598px;top:834px" width="24" height="22" viewBox="0 0 24 22"><path d="M5.1 5.3 V10 H9.9Z" fill="#505866"/><path d="M8.1 8.1 A5 5 0 1 1 8.9 14.4" fill="none" stroke="#505866" stroke-width="2"/><path d="M12.4 8.2 V12.3 H9.6" fill="none" stroke="#505866" stroke-width="1.7"/></svg>
<div class="t" style="left:1622.50px;top:835px;font-size:14px;font-weight:400;color:#5b6270;letter-spacing:0.4px;-webkit-text-stroke:0.12px #5b6270;">Historique</div>
</body></html>
